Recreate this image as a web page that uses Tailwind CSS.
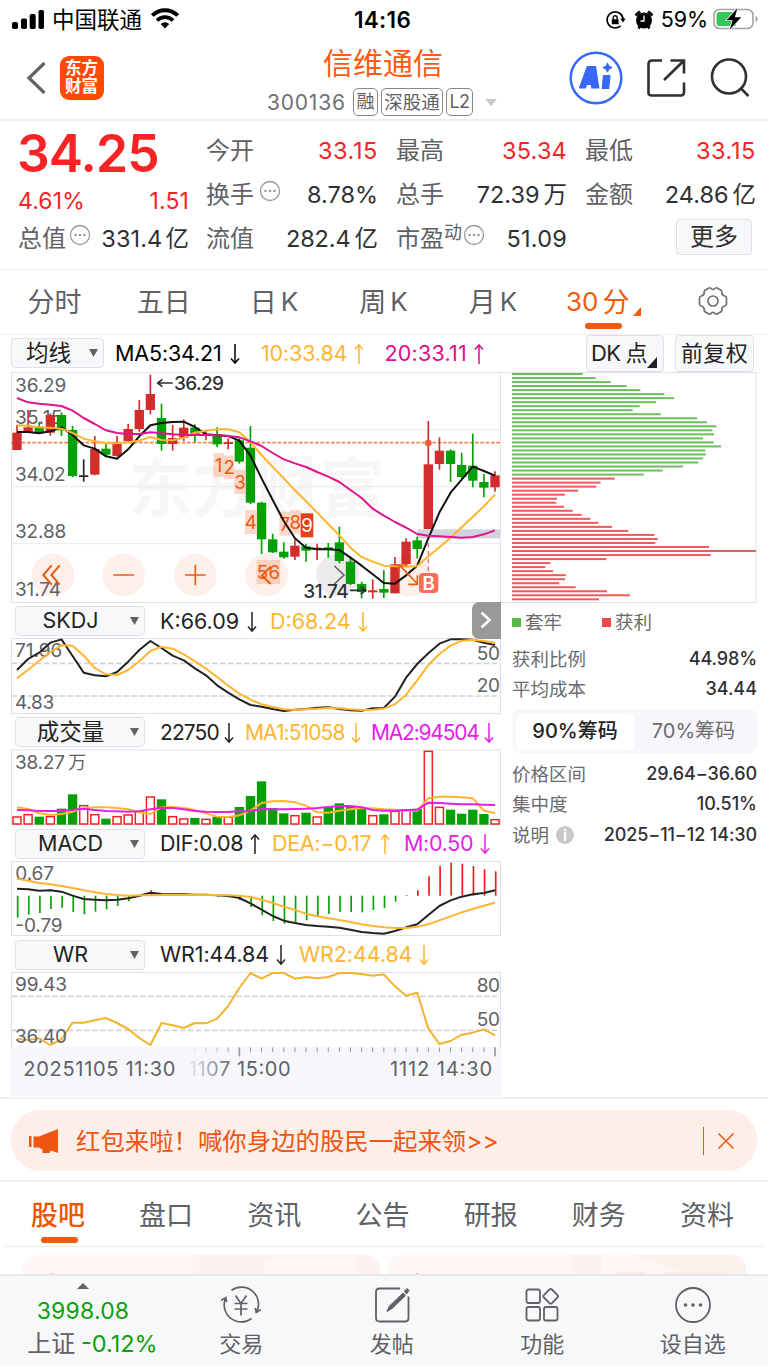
<!DOCTYPE html>
<html lang="zh-CN">
<head>
<meta charset="utf-8">
<title>信维通信 300136</title>
<script src="https://cdn.jsdelivr.net/npm/@tailwindcss/browser@4"></script>
</head>
<body class="w-[768px] h-[1366px] overflow-hidden bg-white font-[Inter,'Noto_Sans_CJK_SC',sans-serif] text-[#606165] leading-none">
<svg class="hidden">
  <symbol id="down" viewBox="0 0 10 22"><path d="M5 1v19M1 15.500l4 4.700 4-4.700" fill="none" stroke="currentColor" stroke-width="1.500"/></symbol>
  <symbol id="up" viewBox="0 0 10 22"><path d="M5 21V2M1 6.500l4-4.700 4 4.700" fill="none" stroke="currentColor" stroke-width="1.500"/></symbol>
  <symbol id="dots" viewBox="0 0 22 22"><circle cx="11" cy="11" r="9.500" fill="none" stroke="#98999c" stroke-width="1.300"/><g fill="#98999c"><circle cx="6.500" cy="11" r="1.300"/><circle cx="11" cy="11" r="1.300"/><circle cx="15.500" cy="11" r="1.300"/></g></symbol>
</svg>

<!-- status bar -->
<div class="h-10 flex items-center text-black relative">
  <svg class="ml-3 w-8 h-5 shrink-0" viewBox="0 0 32 20"><rect x="0" y="12" width="6" height="7" rx="1.800"/><rect x="9" y="8.500" width="6" height="10.500" rx="1.800"/><rect x="17.700" y="4" width="6" height="15" rx="1.800"/><rect x="26.500" y="0" width="5.500" height="19" rx="1.800"/></svg>
  <span class="ml-[8px] text-[22.500px]">中国联通</span>
  <svg class="ml-[9px] w-7 h-[21px] -mt-[3px]" viewBox="0 0 28 21"><g fill="none" stroke="#000" stroke-width="3.800"><path d="M1.300 7.500a18 18 0 0 1 25.400 0"/><path d="M6 12.500a11.300 11.300 0 0 1 16 0"/></g><path d="M14 20.500l-4.300-4.400a6.200 6.200 0 0 1 8.600 0z"/></svg>
  <span class="absolute left-[354px] text-[22.500px] font-semibold tracking-[0.3px]">14:16</span>
  <svg class="ml-auto w-5 h-5" viewBox="0 0 20 20"><g fill="none" stroke="#000" stroke-width="1.700"><path d="M14.500 15.800a8 8 0 1 1 2.600-6.500"/><path d="M7.300 10V7.600a1.900 1.900 0 0 1 3.800 0V10" stroke-width="1.400"/></g><path d="M14.300 8.500h5.400l-2.700 4zM5.800 9.200h6.800v5H5.800z"/></svg>
  <svg class="ml-[9px] w-[18px] h-5" viewBox="0 0 18 20"><circle cx="9" cy="10.500" r="8"/><path d="M0.500 5.500L5 1.500M17.500 5.500L13 1.500" stroke="#000" stroke-width="3"/><path d="M3.500 18.500l2-3M14.500 18.500l-2-3" stroke="#000" stroke-width="2.500"/><path d="M9 5.500v5.500H5.500" stroke="#fff" stroke-width="1.300" fill="none"/></svg>
  <span class="ml-2 text-[21.500px] tracking-[-0.1px]">59%</span>
  <svg class="ml-[5px] mr-[9px] w-[46px] h-[24px] -mt-[2px]" viewBox="0 0 46 24"><rect x="1" y="2.500" width="39" height="19" rx="5.500" fill="none" stroke="#a2a2a4" stroke-width="1.600"/><path d="M3.500 8q0-3 3-3H23v14H6.500q-3 0-3-3z" fill="#34c759"/><path d="M42.500 8.500q4.500 3.500 0 7z" fill="#a2a2a4"/><path d="M24.500 1L13.500 13.300h6.200L16.800 22.500 28.300 10.300h-6.500z" stroke="#fff" stroke-width="1.500"/><path d="M24.500 1L13.500 13.300h6.200L16.800 22.500 28.300 10.300h-6.500z"/></svg>
</div>

<!-- header -->
<header class="h-[81px] border-b-2 border-[#ededf0] flex relative">
  <svg class="ml-[26px] mt-[21px] w-5 h-[34px]" viewBox="0 0 20 34"><path d="M18.500 2L3 17l15.500 15" fill="none" stroke="#636363" stroke-width="3.200"/></svg>
  <div class="ml-[13.500px] mt-[15.500px] w-11 h-11 rounded-[9px] bg-[#ff4a06] text-white text-[16.500px] leading-[17.500px] font-bold flex flex-col items-center justify-center"><span>东方</span><span>财富</span></div>
  <div class="absolute left-[267px] w-[232px] top-[6px] flex flex-col items-center">
    <h1 class="text-[30px] leading-[34px] text-[#ff5a10]">信维通信</h1>
    <div class="flex items-center mt-[8px] self-start">
      <span class="w-[86px] text-[21px] text-[#707073] tracking-[0.8px]">300136</span>
      <span class="h-7 w-[25px] border-[1.500px] border-[#88888a] rounded-[5px] text-[18px] flex items-center justify-center">融</span>
      <span class="ml-[3px] h-7 w-[62px] border-[1.500px] border-[#88888a] rounded-[5px] text-[18.500px] flex items-center justify-center">深股通</span>
      <span class="ml-[3px] h-7 w-[27px] border-[1.500px] border-[#88888a] rounded-[5px] text-[18px] tracking-[-0.5px] flex items-center justify-center">L2</span>
      <svg class="ml-3 w-3 h-[7px]" viewBox="0 0 12 7"><path d="M0 0h12L6 7z" fill="#c8c8c8"/></svg>
    </div>
  </div>
  <svg class="ml-auto mt-[11px] w-[54px] h-[54px]" viewBox="0 0 54 54"><circle cx="27" cy="27" r="25.300" fill="none" stroke="#3768f8" stroke-width="2.500"/><g fill="#3768f8" stroke="#3768f8" stroke-linejoin="round" stroke-width="1.200"><path fill-rule="evenodd" d="M18.300 15.500h8.200l3.300 21.500h-7l-.3-3.500h-4.700L16.300 37H10.500zM20.300 28.500h1.700l-.3-4z"/><path d="M34.500 24.500h6.500l-1.300 13H33.300z"/><path d="M38.500 12.500l1.400 2.700 2.900 1.300-2.900 1.400-1.400 2.800-1.400-2.800-2.900-1.400 2.900-1.300z"/></g></svg>
  <svg class="ml-[23px] mt-[18px] w-10 h-10" viewBox="0 0 40 40"><g fill="none" stroke="#303030" stroke-width="2.600"><path d="M16 2.500H6Q2.500 2.500 2.500 6v29Q2.500 37.500 6 37.500h29Q38 37.500 38 34V24.500"/><path d="M24.500 2.500H38V15.500M37.500 3L18 22"/></g></svg>
  <svg class="ml-[23px] mr-[19px] mt-[18px] w-10 h-10" viewBox="0 0 40 40"><g fill="none" stroke="#303030" stroke-width="2.600"><circle cx="20" cy="18.500" r="17"/><path d="M31.500 30l8 8"/></g></svg>
</header>

<!-- quote -->
<section class="h-[148.500px] border-b border-[#efeff2] pt-2 pl-[18px] flex text-[24px]">
  <div class="w-[171px] text-[#f62426]">
    <div class="h-[49px] text-[51.500px] font-semibold leading-[49px] tracking-[-0.9px] -ml-[1px]">34.25</div>
    <div class="mt-[9px] h-7 flex justify-between items-center text-[23px] tracking-[0.1px]"><span>4.61%</span><span>1.51</span></div>
    <div class="mt-[2px] h-11 flex items-center text-[#303033] tracking-[0.1px]"><span class="text-[#606165]">总值</span><svg class="ml-[3px] -mt-2 w-[22px] h-[22px]"><use href="#dots"/></svg><span class="ml-auto whitespace-nowrap text-[23.500px]">331.4<span class="ml-[3px]">亿</span></span></div>
  </div>
  <div class="ml-[17px] w-[172px] text-[#303033]">
    <div class="h-11 flex items-center justify-between"><span class="text-[#606165]">今开</span><span class="text-[#f62426] text-[23.500px] tracking-[0.6px]">33.15</span></div>
    <div class="h-11 flex items-center"><span class="text-[#606165]">换手</span><svg class="ml-[5px] -mt-2 w-[22px] h-[22px]"><use href="#dots"/></svg><span class="ml-auto text-[23.500px]">8.78%</span></div>
    <div class="h-11 flex items-center justify-between"><span class="text-[#606165]">流值</span><span class="text-[23.500px] tracking-[-0.1px]">282.4<span class="ml-[4px]">亿</span></span></div>
  </div>
  <div class="ml-[18px] w-[171px] text-[#303033]">
    <div class="h-11 flex items-center justify-between"><span class="text-[#606165]">最高</span><span class="text-[#f62426] text-[23.500px] tracking-[0.2px]">35.34</span></div>
    <div class="h-11 flex items-center justify-between"><span class="text-[#606165]">总手</span><span class="text-[23.500px]">72.39<span class="ml-[4px]">万</span></span></div>
    <div class="h-11 flex items-center"><span class="text-[#606165]">市盈</span><span class="text-[18px] text-[#606165] -mt-3">动</span><svg class="-mt-2 ml-[1px] w-[22px] h-[22px]"><use href="#dots"/></svg><span class="ml-auto text-[23.500px] tracking-[0.2px]">51.09</span></div>
  </div>
  <div class="ml-[18px] w-[171px] text-[#303033]">
    <div class="h-11 flex items-center justify-between"><span class="text-[#606165]">最低</span><span class="text-[#f62426] text-[23.500px] tracking-[0.6px]">33.15</span></div>
    <div class="h-11 flex items-center justify-between"><span class="text-[#606165]">金额</span><span class="text-[23.500px]">24.86<span class="ml-[4px]">亿</span></span></div>
    <div class="mt-[1.500px] ml-auto mr-[4px] w-[76px] h-9 border-[1.500px] border-[#dfe1e8] rounded bg-[#f7f8fa] flex items-center justify-center">更多</div>
  </div>
</section>

<!-- period tabs -->
<nav class="h-[65px] border-b border-[#efeff2] flex text-[27px] text-[#606165] pt-px">
  <div class="w-[109px] flex items-center justify-center">分时</div>
  <div class="w-[109.600px] flex items-center justify-center">五日</div>
  <div class="w-[109.600px] flex items-center justify-center gap-1 pl-px">日<span class="text-[26px]">K</span></div>
  <div class="w-[109.600px] flex items-center justify-center gap-1 pl-px">周<span class="text-[26px]">K</span></div>
  <div class="w-[109.600px] flex items-center justify-center gap-1 pl-px">月<span class="text-[26px]">K</span></div>
  <div class="w-[109.600px] flex items-center justify-center gap-1 text-[#f05a0a] relative pl-[3px]"><span class="text-[26px]">30</span>分<svg class="mt-[18px] w-2 h-[9px]" viewBox="0 0 8 9"><path d="M8 0v9H0z" fill="#f05a0a"/></svg><span class="absolute left-[37.500px] bottom-[5px] w-[37px] h-[6px] rounded-full bg-[#f05a0a]"></span></div>
  <div class="w-[109.600px] flex items-center justify-center pl-[2px]"><svg class="w-8 h-8 -mt-[2px]" viewBox="0 0 32 32"><g fill="none" stroke="#707070" stroke-width="1.700"><circle cx="16" cy="16" r="5"/><path d="M11 3.500q2-1.500 3 0 2 2 4 0 1-1.500 3 0l3 1.700q1 .8.800 2.300 0 3 3 3.500 1.700.4 1.700 2.200v5.600q0 1.800-1.700 2.200-3 .5-3 3.500.2 1.500-.8 2.300l-3 1.700q-2 1.500-3 0-2-2-4 0-1 1.500-3 0l-3-1.700q-1-.8-.8-2.300 0-3-3-3.500-1.700-.4-1.700-2.200v-5.600q0-1.800 1.700-2.200 3-.5 3-3.500-.2-1.500.8-2.300z"/></g></svg></div>
</nav>

<!-- charts -->
<main class="h-[764.500px] border-b-2 border-[#ededf2] relative">
  <div class="h-[37px] pl-[11px] flex items-center text-[21.500px] tracking-[-0.15px]">
    <div class="w-[93px] h-[30px] border-[1.500px] border-[#dfe1e8] rounded bg-[#f7f8fa] flex items-center text-[22.500px] tracking-normal text-[#222]"><span class="ml-[14px]">均线</span><svg class="ml-auto mr-[5px] w-[9px] h-2" viewBox="0 0 9 8"><path d="M0 0h9L4.500 8z" fill="#606165"/></svg></div>
    <div class="ml-[11px] w-[125px] mt-[2px] flex items-center text-black">MA5:34.21<svg class="ml-auto w-[10px] h-[22px]"><use href="#down"/></svg></div>
    <div class="ml-[21px] w-[103px] mt-[2px] flex items-center text-[#ffb52e]">10:33.84<svg class="ml-auto w-[10px] h-[22px]"><use href="#up"/></svg></div>
    <div class="ml-[20.500px] w-[99.500px] mt-[2px] flex items-center text-[#e00c8c] tracking-[0.2px]">20:33.11<svg class="ml-auto w-[10px] h-[22px]"><use href="#up"/></svg></div>
    <div class="ml-[102px] w-[78px] h-[37px] border-[1.500px] border-[#dfe1e8] rounded bg-[#f7f8fa] flex items-center text-[22px] text-[#222] tracking-[-0.6px]"><span class="ml-[4px]">DK</span><span class="ml-[5px]">点</span><svg class="mt-[18px] w-[10px] h-[11px]" viewBox="0 0 10 11"><path d="M10 0v11H0z" fill="#222"/></svg></div>
    <div class="ml-[11px] w-[79px] h-[37px] border-[1.500px] border-[#dfe1e8] rounded bg-[#f7f8fa] flex items-center justify-center text-[22px] tracking-[0.3px] text-[#222]">前复权</div>
  </div>
  <div class="flex pl-[11px]">
    <div class="w-[490px] relative">
      <svg id="main" class="block w-[490px] h-[231px]" viewBox="33 111 1470 693"></svg>
      <div class="h-[35px] pt-[2px] pl-[4px] flex items-center text-[21.500px]">
        <div class="w-[130px] h-[30px] border-[1.500px] border-[#dfe1e8] rounded bg-[#f7f8fa] flex items-center text-[#222]"><span class="w-[109px] text-center">SKDJ</span><svg class="ml-auto mr-[5px] w-[9px] h-2" viewBox="0 0 9 8"><path d="M0 0h9L4.500 8z" fill="#606165"/></svg></div>
        <div class="ml-[15px] w-[97px] mt-px flex items-center text-[#222]">K:66.09<svg class="ml-auto w-[10px] h-[22px]"><use href="#down"/></svg></div>
        <div class="ml-[13px] w-[98px] mt-px flex items-center text-[#ffb52e]">D:68.24<svg class="ml-auto w-[10px] h-[22px]"><use href="#down"/></svg></div>
      </div>
      <svg id="skdj" class="block w-[490px] h-[76px]" viewBox="33 114 1470 228"></svg>
      <div class="h-[35px] pt-[2px] pl-[4px] flex items-center text-[21px] tracking-[-0.9px]">
        <div class="w-[130px] h-[30px] border-[1.500px] border-[#dfe1e8] rounded bg-[#f7f8fa] flex items-center text-[22.500px] tracking-normal text-[#222]"><span class="w-[109px] text-center">成交量</span><svg class="ml-auto mr-[5px] w-[9px] h-2" viewBox="0 0 9 8"><path d="M0 0h9L4.500 8z" fill="#606165"/></svg></div>
        <div class="ml-[15px] w-[74px] mt-px flex items-center text-[#222]">22750<svg class="ml-auto w-[10px] h-[22px]"><use href="#down"/></svg></div>
        <div class="ml-[11px] w-[116px] mt-px flex items-center text-[#ffb52e]">MA1:51058<svg class="ml-auto w-[10px] h-[22px]"><use href="#down"/></svg></div>
        <div class="ml-[10px] w-[123px] mt-px flex items-center text-[#e61ee6] tracking-[-1.200px]">MA2:94504<svg class="ml-auto w-[10px] h-[22px]"><use href="#down"/></svg></div>
      </div>
      <svg id="vol" class="block w-[490px] h-[76px]" viewBox="33 447 1470 228"></svg>
      <div class="h-[36px] pt-[2px] pl-[4px] flex items-center text-[21.500px] tracking-[-0.3px]">
        <div class="w-[130px] h-[30px] border-[1.500px] border-[#dfe1e8] rounded bg-[#f7f8fa] flex items-center tracking-[0.1px] text-[#222]"><span class="w-[109px] text-center">MACD</span><svg class="ml-auto mr-[5px] w-[9px] h-2" viewBox="0 0 9 8"><path d="M0 0h9L4.500 8z" fill="#606165"/></svg></div>
        <div class="ml-[15px] w-[100px] mt-px flex items-center text-[#222]">DIF:0.08<svg class="ml-auto w-[10px] h-[22px]"><use href="#up"/></svg></div>
        <div class="ml-[12px] w-[118px] mt-px flex items-center text-[#ffb52e]">DEA:−0.17<svg class="ml-auto w-[10px] h-[22px]"><use href="#up"/></svg></div>
        <div class="ml-[14px] w-[86px] mt-px flex items-center text-[#e61ee6]">M:0.50<svg class="ml-auto w-[10px] h-[22px]"><use href="#down"/></svg></div>
      </div>
      <svg id="macd" class="block w-[490px] h-[75px]" viewBox="33 18 1470 225"></svg>
      <div class="h-[36px] pt-[2px] pl-[4px] flex items-center text-[21.500px] tracking-[-0.1px]">
        <div class="w-[130px] h-[30px] border-[1.500px] border-[#dfe1e8] rounded bg-[#f7f8fa] flex items-center text-[#222]"><span class="w-[109px] text-center">WR</span><svg class="ml-auto mr-[5px] w-[9px] h-2" viewBox="0 0 9 8"><path d="M0 0h9L4.500 8z" fill="#606165"/></svg></div>
        <div class="ml-[15px] w-[126px] mt-px flex items-center text-[#222]">WR1:44.84<svg class="ml-auto w-[10px] h-[22px]"><use href="#down"/></svg></div>
        <div class="ml-[13px] w-[130px] mt-px flex items-center text-[#ffb52e]">WR2:44.84<svg class="ml-auto w-[10px] h-[22px]"><use href="#down"/></svg></div>
      </div>
      <svg id="wr" class="block w-[490px] h-[126px]" viewBox="33 351 1470 378"></svg>
      <div class="absolute right-0 top-[230px] w-[29.500px] h-[37px] rounded-l-[7px] bg-[#999] flex items-center justify-center"><svg class="w-3 h-[18px]" viewBox="0 0 12 18"><path d="M1.500 1.500L9.500 9l-8 7.500" fill="none" stroke="#fff" stroke-width="2.500"/></svg></div>
    </div>
    <aside class="w-[256px] text-[18.500px] text-[#6a6b6f]">
      <svg id="chips" class="block w-[256px] h-[231px]" viewBox="3 21 768 693"></svg>
      <div class="ml-[11px] w-[245px]">
        <div class="h-10 flex items-center"><span class="w-[9px] h-[9px] bg-[#57b947] mr-[4px]"></span>套牢<span class="w-[9px] h-[9px] bg-[#eb4a4a] ml-[40px] mr-[4px]"></span>获利</div>
        <div class="h-[30px] flex items-center justify-between mt-[1.500px]">获利比例<span class="font-medium text-[18px] text-[#303033] tracking-[-0.1px]">44.98%</span></div>
        <div class="h-[30px] flex items-center justify-between">平均成本<span class="font-medium text-[18px] text-[#303033]">34.44</span></div>
        <div class="mt-[5px] h-11 rounded-lg bg-[#f7f7fb] p-[4px] flex items-center text-[20px]"><span class="w-[118px] h-[37px] rounded-[6px] bg-white flex items-center justify-center font-medium text-[#222]">90%筹码</span><span class="flex-1 text-center">70%筹码</span></div>
        <div class="mt-[6px] h-[30px] flex items-center justify-between">价格区间<span class="font-medium text-[18px] text-[#303033] tracking-[-0.1px]">29.64−36.60</span></div>
        <div class="h-[30px] flex items-center justify-between">集中度<span class="font-medium text-[18px] text-[#303033]">10.51%</span></div>
        <div class="h-[32px] flex items-center">说明<span class="ml-[7px] w-[18px] h-[18px] rounded-full bg-[#c8c8ca] text-white text-[15px] font-bold flex items-center justify-center">i</span><span class="ml-auto font-medium text-[18px] text-[#303033] tracking-[-0.1px] whitespace-nowrap">2025−11−12 14:30</span></div>
      </div>
    </aside>
  </div>
</main>

<!-- promo banner -->
<section class="h-[83px] border-b-2 border-[#ededf0] pt-[11px] px-[11px]">
  <div class="h-[61px] rounded-[30px] bg-[#fdeee7] flex items-center text-[#ee5510]">
    <svg class="ml-[18px] w-[29px] h-[26px]" viewBox="0 0 29 26"><path d="M0 8h2.500v11H0zM4.500 8.500H10L29 1v24l-7-2.500-1.500 2.500h-7v-3.500L10 19.500H4.500z" fill="#ee5510"/></svg>
    <span class="ml-[18px] mt-[2px] text-[24.400px]">红包来啦！喊你身边的股民一起来领&gt;&gt;</span>
    <span class="ml-auto w-px h-[28px] bg-[#ee5510]"></span>
    <svg class="ml-[14px] mr-[23px] w-4 h-4" viewBox="0 0 16 16"><path d="M.5.5l15 15m0-15l-15 15" stroke="#ee5510" stroke-width="1.500"/></svg>
  </div>
</section>

<nav class="mx-[5px] h-[64.500px] border-b-[1.500px] border-[#ebebef] flex items-center text-[27px] leading-[40px]">
  <div class="w-[108px] h-full pt-[4px] -ml-px flex items-center justify-center font-medium text-[#ee5500] relative">股吧<span class="absolute bottom-[3px] left-[36.500px] w-[37px] h-[6px] rounded-full bg-[#f05a0a]"></span></div>
  <div class="w-[108.200px] pt-[4px] text-center">盘口</div>
  <div class="w-[108.200px] pt-[4px] text-center">资讯</div>
  <div class="w-[108.200px] pt-[4px] text-center">公告</div>
  <div class="w-[108.200px] pt-[4px] text-center">研报</div>
  <div class="w-[108.200px] pt-[4px] text-center">财务</div>
  <div class="w-[108.200px] pt-[4px] text-center">资料</div>
</nav>

<div class="h-[27px] overflow-hidden pt-2 pl-[23px] flex gap-2">
  <div class="w-[357px] h-10 rounded-[14px] overflow-hidden"><svg class="block w-[357px] h-10" viewBox="0 0 357 40"><rect width="357" height="40" fill="#fef7f3"/><path d="M170 0h187v40H170z" fill="#fdf2ef"/><path d="M242 3h90v17h-90z" fill="#fef7f5"/><circle cx="29" cy="24" r="5.500" fill="#ef6a58"/></svg></div>
  <div class="w-[358px] h-10 rounded-[14px] overflow-hidden"><svg class="block w-[358px] h-10" viewBox="0 0 358 40"><rect width="358" height="40" fill="#fef7f3"/><path d="M184 0h30v40h-30z" fill="#fdf2ef"/><path d="M245 0h113v40z" fill="#fdf1ee"/><path d="M228 17h30v8h-30zM275 17h60v8h-60z" fill="#fce9e6"/><circle cx="29" cy="24" r="5.500" fill="#ef6a58"/></svg></div>
</div>

<!-- bottom bar -->
<footer class="h-[91px] bg-[#f7f8fa] border-t-2 border-[#e7e7ec] flex text-[22px]">
  <div class="w-[166px] flex flex-col items-center text-[#0aa00a]">
    <svg class="mt-[7px] w-3 h-[6px]" viewBox="0 0 12 6"><path d="M6 0l6 6H0z" fill="#606165"/></svg>
    <span class="mt-[11px] w-full text-center text-[23px] tracking-[0.2px]">3998.08</span>
    <span class="mt-[9px] ml-[19px] whitespace-nowrap text-[23.500px]"><span class="text-[24px] text-[#606165]">上证</span> <span class="-ml-px">-0.12%</span></span>
  </div>
  <div class="w-[150.500px] flex flex-col items-center pt-[9px]"><svg class="w-10 h-10" viewBox="0 0 40 40"><g fill="none" stroke="#606165" stroke-width="1.700"><path d="M10.500 5.300A17 17 0 0 1 36 26M30.500 33.500A17 17 0 0 1 4.500 13.500M0 15.500l4.700-3 1 4.500M40 24.500l-4.700 3-1-4.500"/><path d="M14.500 10.500l5.500 8 5.500-8M20 18.500v12M13.500 18.500h13M13.500 24h13"/></g></svg><span class="mt-[8px]">交易</span></div>
  <div class="w-[150.500px] flex flex-col items-center pt-[9px]"><svg class="w-10 h-10" viewBox="0 0 40 40"><g fill="none" stroke="#606165" stroke-width="1.800"><path d="M28 3.500H7.500Q4 3.500 4 7v26q0 3.500 3.500 3.500h26Q36.500 36.500 36.500 33V11.500"/></g><path d="M15 26.500l2-5L31 8l2.500 2.500L20 23.500zM32.500 6.500L35 3.500l2 2L34.500 9z" fill="#606165" stroke="#606165"/></svg><span class="mt-[8px]">发帖</span></div>
  <div class="w-[150.500px] flex flex-col items-center pt-[9px]"><svg class="w-10 h-10" viewBox="0 0 40 40"><g fill="none" stroke="#606165" stroke-width="1.800"><rect x="4.500" y="4.500" width="13.500" height="13.500" rx="2"/><rect x="4.500" y="22" width="13.500" height="13.500" rx="2"/><rect x="22" y="22" width="13.500" height="13.500" rx="2"/><path d="M27.500 4.500q1.200-1.200 2.400 0l5.600 5.600q1.200 1.200 0 2.400l-5.600 5.600q-1.200 1.200-2.400 0l-5.600-5.600q-1.200-1.200 0-2.400z"/></g></svg><span class="mt-[8px]">功能</span></div>
  <div class="w-[150.500px] flex flex-col items-center pt-[9px]"><svg class="w-10 h-10" viewBox="0 0 40 40"><circle cx="20" cy="20" r="17" fill="none" stroke="#606165" stroke-width="1.800"/><g fill="#606165"><circle cx="12.500" cy="20" r="1.800"/><circle cx="20" cy="20" r="1.800"/><circle cx="27.500" cy="20" r="1.800"/></g></svg><span class="mt-[8px]">设自选</span></div>
</footer>

<script>
const X = i => 51 + i * 33.35;
const RED = '#d22c2c', GREEN = '#05a005', ORANGE = '#f05a0a', YEL = '#ffb52e';
const el = id => document.getElementById(id);
const line = (x1, y1, x2, y2, c, w, extra = '') => `<line x1="${x1}" y1="${y1}" x2="${x2}" y2="${y2}" stroke="${c}" stroke-width="${w}" ${extra}/>`;
const rect = (x, y, w, h, c, extra = '') => `<rect x="${x}" y="${y}" width="${w}" height="${h}" fill="${c}" ${extra}/>`;
const text = (x, y, s, w, size = 57, c = '#606165', extra = '') => `<text x="${x}" y="${y}" font-size="${size}" fill="${c}" ${w ? `textLength="${w}"` : ''} ${extra}>${s}</text>`;
const series = (a, c, w = 6) => `<polyline fill="none" stroke="${c}" stroke-width="${w}" stroke-linejoin="round" points="${a.map((v, i) => X(i).toFixed(1) + ',' + v).join(' ')}"/>`;
const frame = (y, h) => `<rect x="34.500" y="${y}" width="1467" height="${h}" fill="none" stroke="#dfe1e8" stroke-width="3"/>`;
const path = (d, c, w, extra = '') => `<path d="${d}" fill="none" stroke="${c}" stroke-width="${w}" ${extra}/>`;

// candles: colour, high, body top, body bottom, low
const candles = [
['r',270,293,345,345],['r',225,277,290,290],['g',260,275,293,293],['r',235,240,293,302],['g',232,240,286,303],['g',272,285,423,427],
['k',373,421,424,440],['r',303,342,419,421],['g',325,341,359,363],['r',303,327,363,365],['r',266,282,318,320],['r',195,225,282,290],
['r',119,177,225,238],['g',206,249,327,347],['r',270,309,327,347],['r',253,278,308,318],['g',268,278,298,322],['r',285,298,302,316],
['g',277,298,328,336],['r',310,322,326,343],['g',310,316,380,386],['g',273,338,503,507],['g',500,503,613,657],['g',596,613,652,654],
['g',622,650,667,671],['r',614,632,665,675],['g',626,634,647,680],['r',626,638,643,675],['g',624,637,642,668],['g',575,622,678,685],
['g',668,680,747,750],['g',740,747,771,790],['r',733,766,772,791],['g',706,762,773,789],['r',666,688,775,775],['r',610,620,687,692],
['g',605,616,642,670],['r',258,388,582,582],['r',307,347,387,404],['g',343,347,387,441],['g',353,390,426,430],['g',296,392,437,457],
['g',417,441,458,487],['r',409,421,457,470]];
const ma5 = [291,291,295,289,277,300,331,341,364,371,343,304,271,264,261,260,276,298,301,303,317,362,430,495,558,610,638,643,643,645,668,692,718,744,746,721,692,610,532,473,434,395,408,422];
const ma10 = [271,272,277,278,281,294,311,319,325,325,322,317,306,315,316,308,293,287,283,283,292,322,360,396,430,466,499,533,567,601,638,666,680,692,694,695,694,664,637,608,577,545,514,479];
const ma20 = [189,202,206,209,213,227,249,267,286,294,297,297,292,295,298,300,300,300,301,303,307,319,333,354,373,385,396,411,425,441,465,489,521,542,561,578,597,602,604,606,608,606,598,586];
let s = '';
s += text(386, 528, '东方财富', 768, 192, '#f6f6f7', 'font-weight="700" font-family="Noto Sans CJK SC"');
for (const y of [284, 455, 626]) s += line(33, y, 1503, y, '#e7edf4', 4);
s += frame(112.5, 690);
s += rect(1252, 583, 248, 27, '#d2d4dd');
for (const cx of [159, 371, 586, 800, 1228]) s += `<circle cx="${cx}" cy="720" r="64" fill="#fdf0ea"/>`;
s += `<circle cx="1013" cy="720" r="64" fill="#ebebeb"/>`;
s += text(45, 171, '36.29', 154) + text(45, 266, '35.15', 142) + text(45, 437, '34.02', 152) + text(45, 610, '32.88', 154) + text(45, 782, '31.74', 138);
s += line(33, 323, 1500, 323, '#f2874e', 5, 'stroke-dasharray="11 5"');
s += path('M1285 600V710', '#f26a5a', 4, 'stroke-dasharray="12 12"');
candles.forEach(([t, h, a, b, l], i) => {
  const c = t === 'r' ? RED : t === 'g' ? GREEN : '#222', x = X(i);
  s += line(x, h, x, l, c, 5) + rect(x - 14, a, 28, Math.max(b - a, 5), c);
});
const tags = [[640,354,32,'1'],[672,361,31,'2'],[703,405,34,'3'],[735,525,35,'4'],[770,675,35,'5'],[805,675,35,'6'],[838,530,32,'7'],[870,525,32,'8']];
for (const [x, y, w, n] of tags) s += rect(x, y, w, 72, '#f9a98a', 'opacity=".45"') + text(x + w / 2, y + 57, n, 0, 56, ORANGE, 'text-anchor="middle"');
s += rect(902, 535, 38, 72, '#e2421a') + text(921, 592, '9', 0, 56, '#fff', 'text-anchor="middle"');
s += series(ma5, '#111') + series(ma10, YEL) + series(ma20, '#e0148c');
s += `<circle cx="1285" cy="324" r="10" fill="#f4583a"/>`;
s += path('M155 691L130 720l25 29M179 691L154 720l25 29', ORANGE, 6);
s += path('M340 720h62M555 720h62M586 689v62', ORANGE, 5);
s += path('M812 695l-26 27 26 25', ORANGE, 6) + path('M1003 693l29 27-29 27', '#666', 5);
s += path('M1200 692l50 52M1225 748h27v-27M1197 715v-25h26', ORANGE, 5);
s += rect(1257, 714, 58, 60, '#fb6d5c', 'rx="12"') + text(1286, 764, 'B', 0, 56, '#fff', 'text-anchor="middle" font-weight="600"');
s += path('M472 144h46M487 133l-14 11 14 11', '#303033', 5) + text(522, 165, '36.29', 150, 57, '#303033', 'font-weight="500"');
s += text(910, 788, '31.74', 136, 57, '#303033', 'font-weight="500"') + path('M1050 766h46M1082 755l15 11-15 11', '#303033', 5);
el('main').innerHTML = s;

s = frame(115.5, 225) + [190, 288].map(y => line(36, y, 1500, y, '#d4d4d8', 5, 'stroke-dasharray="16 8"')).join('');
s += text(45, 171, '71.96', 142) + text(45, 328, '4.83', 118) + text(1430, 180, '50', 70) + text(1430, 276, '20', 70);
s += series([210,177,158,128,118,168,218,226,229,216,185,150,123,144,167,181,205,226,256,278,298,315,320,327,333,329,327,323,322,327,331,332,325,324,290,233,192,160,131,118,118,119,128,135], '#222');
s += series([235,209,182,156,136,137,167,204,223,225,210,184,153,140,146,163,184,206,231,257,281,299,313,321,328,330,328,326,324,325,328,330,329,326,313,284,241,195,162,137,122,119,123,128], YEL);
el('skdj').innerHTML = s;

s = frame(450, 223.5) + text(45, 506, '38.27', 150) + text(205, 507, '万', 0, 54);
'r649 r642 g650 r648 g626 g583 r615 r642 g656 r648 r643 r632 r589 g598 r648 r655 g654 r656 g650 r650 g621 g588 g544 g624 g640 r645 g638 r649 g621 g610 g618 g626 r645 g643 r632 r628 g626 r452 r620 g629 g641 g629 g642 r657'.split(' ').forEach((d, i) => {
  const y = +d.slice(1), x = X(i) - 14;
  s += d[0] === 'g' ? rect(x, y, 28, 674 - y, GREEN) : rect(x + 2, y + 2, 24, 670 - y, '#fff', 'stroke="#f02222" stroke-width="4.500"');
});
s += series([622,627,640,645,642,635,625,622,622,624,628,637,642,622,621,624,630,640,650,651,646,632,609,604,603,607,617,637,638,632,628,624,625,628,629,632,632,595,590,590,592,595,632,639], YEL);
s += series([630,631,633,633,633,629,626,630,633,634,635,634,628,623,624,628,633,635,636,636,634,633,627,628,628,627,626,624,621,618,618,622,630,632,632,630,629,608,609,611,613,613,614,615], '#e61ee6');
el('vol').innerHTML = s;

s = frame(19.5, 222) + text(46, 75, '0.67', 116) + text(46, 230, '-0.79', 142);
[188,179,174,162,158,171,178,170,163,153,139,0,106,0,0,0,0,0,125,127,135,156,181,198,206,203,196,185,177,171,171,172,165,159,140,120,106,64,33,23,26,33,43,49].forEach((v, i) => {
  if (v) s += line(X(i) + 2, 122, X(i) + 2, v, v < 122 ? '#f01818' : GREEN, 5);
});
s += series([101,103,107,106,110,122,132,134,136,134,130,122,113,117,118,118,119,119,121,123,129,145,164,183,197,204,210,213,215,218,224,231,234,236,228,217,208,180,153,136,125,118,114,106], '#222');
s += series([71,77,84,88,93,99,106,112,117,120,122,121,121,120,120,120,120,120,120,121,122,126,134,144,155,165,176,184,190,195,201,208,213,217,219,219,215,208,196,184,172,162,152,143], YEL);
el('macd').innerHTML = s;

s = frame(352.5, 225) + rect(33, 576, 1470, 153, '#f7f7fb');
s += [424, 526].map(y => line(36, y, 1500, y, '#d4d4d8', 5, 'stroke-dasharray="16 8"')).join('');
s += series([552,555,550,570,553,503,503,496,489,504,522,549,570,504,511,519,504,505,491,453,399,354,371,354,354,371,366,370,366,354,354,357,362,358,394,422,413,521,567,558,539,533,523,541], '#f3b32f');
s += text(45, 408, '99.43', 156) + text(45, 565, '36.40', 156) + text(1430, 411, '80', 70) + text(1430, 514, '50', 70);
for (let i = 16; i <= 43; i++) s += line(X(i), 577, X(i), i === 20 || i === 43 ? 604 : 592, '#999', i === 20 || i === 43 ? 5 : 3, `opacity="${Math.min(1, (i - 15) / 5)}"`);
s += '<defs><linearGradient id="fade" gradientUnits="userSpaceOnUse" x1="570" y1="0" x2="700" y2="0"><stop offset="0" stop-color="#606165" stop-opacity=".1"/><stop offset="1" stop-color="#606165"/></linearGradient></defs>';
s += text(70, 664, '20251105 11:30', 456, 60) + text(566, 664, '1107 15:00', 306, 60, 'url(#fade)') + text(1170, 664, '1112 14:30', 306, 60);
el('wr').innerHTML = s;

s = '<path d="M0 22.500H768.500V712.500H0" fill="none" stroke="#dfe1e8" stroke-width="3"/>';
[248,287,332,380,421,493,523,468,419,398,482,591,621,649,637,642,609,641,663,616,618,609,595,549,488,431,344,302,289,234,195,171,169,192,218,245,271,295,336,385,463,473,466,627,768,632,319,151,136,159,198,195,178,227,321,390,297].forEach((v, i) => {
  s += rect(36, 24 + i * 12.07, v - 36, 6, i < 26 ? '#6cbf5c' : '#ee5a5a');
});
el('chips').innerHTML = s;
</script>
</body>
</html>
